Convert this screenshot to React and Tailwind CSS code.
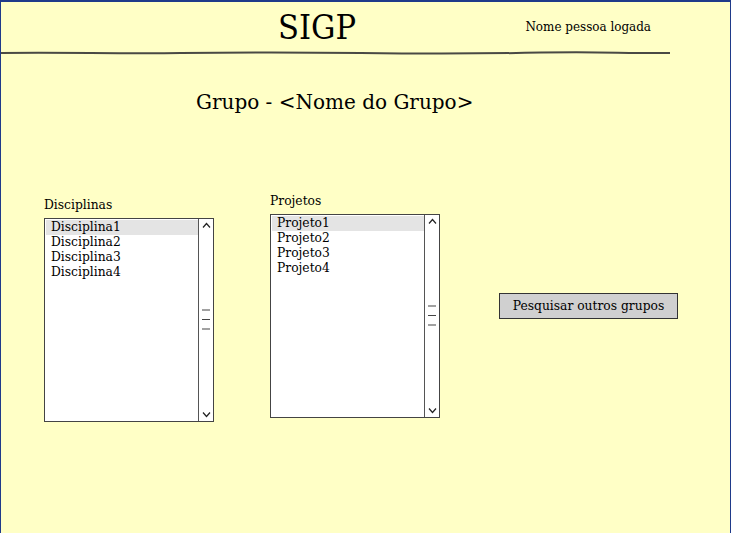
import React from 'react';

const serif = { fontFamily: '"DejaVu Serif", "Liberation Serif", serif' };

function ScrollBar() {
  return (
    <div className="relative w-[15px] shrink-0 border-l border-[#555] bg-white">
      <svg className="absolute left-[3px] top-[3px]" width="9" height="7" viewBox="0 0 9 7">
        <path d="M1 5.5 L4.5 1.5 L8 5.5" fill="none" stroke="#222" strokeWidth="1.2" />
      </svg>
      <svg className="absolute left-[2px] top-[89px]" width="10" height="24" viewBox="0 0 10 24">
        <path d="M1 2 H9 M1 11.5 H9 M1 21 H9" stroke="#444" strokeWidth="1.2" />
      </svg>
      <svg className="absolute left-[3px] bottom-[3px]" width="9" height="7" viewBox="0 0 9 7">
        <path d="M1 1.5 L4.5 5.5 L8 1.5" fill="none" stroke="#222" strokeWidth="1.2" />
      </svg>
    </div>
  );
}

function ListBox({ label, items, labelGap }) {
  return (
    <div className="flex flex-col">
      <span className="text-[12.3px] leading-[14px] text-black" style={serif}>{label}</span>
      <div className={`flex w-[170px] h-[204px] border border-[#444] bg-white ${labelGap}`}>
        <div className="flex-1 pt-[1px] pl-[1px]">
          {items.map((it, i) => (
            <div
              key={it}
              className={`pl-[5px] text-[12.3px] leading-[15px] text-black ${i === 0 ? 'bg-[#e4e4e4]' : ''}`}
              style={serif}
            >
              {it}
            </div>
          ))}
        </div>
        <ScrollBar />
      </div>
    </div>
  );
}

export default function App() {
  return (
    <div className="w-[731px] h-[533px] overflow-hidden bg-[#ffffc6] border-t-2 border-x border-[#1f3a8a]">
      {/* header */}
      <div className="flex items-center h-[49px]">
        <span
          className="ml-[277px] text-[34px] leading-none text-black"
          style={{ fontFamily: '"DejaVu Serif Condensed", "DejaVu Serif", serif' }}
        >
          SIGP
        </span>
        <span
          className="ml-auto mr-[79px] text-[13.3px] text-black"
          style={{ fontFamily: '"DejaVu Serif Condensed", "DejaVu Serif", serif' }}
        >
          Nome pessoa logada
        </span>
      </div>
      <svg width="670" height="4" viewBox="0 0 670 4" className="block">
        <path
          d="M0 2 C60 1.2 120 2.8 180 2 S300 1.2 360 2 S480 2.8 540 1.6 S620 2.4 669 2"
          fill="none"
          stroke="#4a4a44"
          strokeWidth="2"
        />
      </svg>

      {/* group title */}
      <div className="pl-[195px] pt-[35px] text-[20px] leading-[24px] text-black" style={serif}>
        Grupo - &lt;Nome do Grupo&gt;
      </div>

      <div className="flex items-start pl-[43px] pt-[80px]">
        <div className="mt-[4px]">
          <ListBox label="Disciplinas" items={['Disciplina1', 'Disciplina2', 'Disciplina3', 'Disciplina4']} labelGap="mt-[6px]" />
        </div>
        <div className="ml-[56px]">
          <ListBox label="Projetos" items={['Projeto1', 'Projeto2', 'Projeto3', 'Projeto4']} labelGap="mt-[6px]" />
        </div>
        <button
          className="ml-[59px] mt-[99px] w-[179px] h-[26px] border border-[#333] bg-[#d0d0d0] text-[12.3px] text-black"
          style={serif}
        >
          Pesquisar outros grupos
        </button>
      </div>
    </div>
  );
}
